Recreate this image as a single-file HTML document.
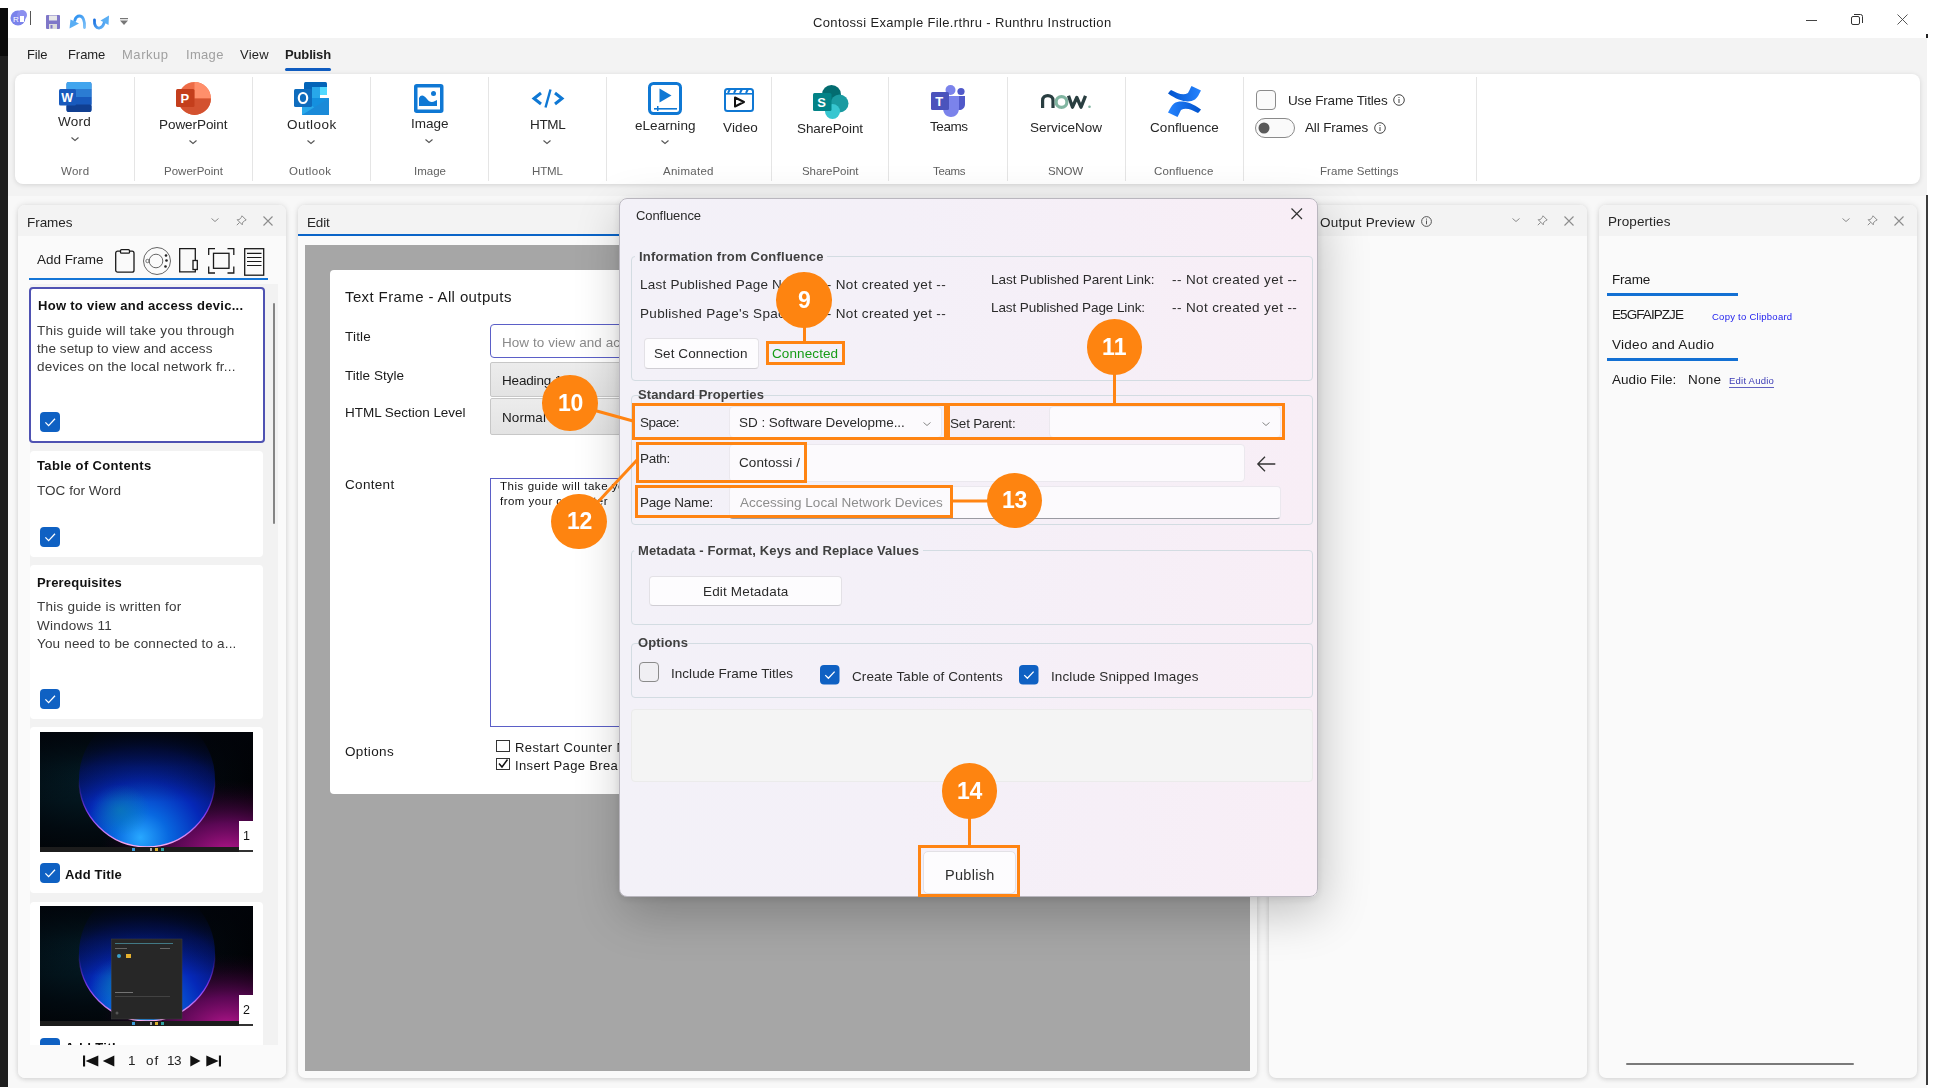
<!DOCTYPE html>
<html><head><meta charset="utf-8">
<style>
*{box-sizing:border-box;margin:0;padding:0}
html,body{width:1935px;height:1092px;overflow:hidden;background:#fff;font-family:"Liberation Sans",sans-serif;color:#1b1b1b;position:relative}
.a{position:absolute}
.t{position:absolute;white-space:nowrap;line-height:1;will-change:transform}
svg{position:absolute;overflow:visible}
</style></head><body>
<div class="a" style="left:0px;top:8px;width:8px;height:48px;background:#0a0a0a"></div>
<div class="a" style="left:0px;top:56px;width:8px;height:1031px;background:#1e1e1e"></div>
<div class="a" style="left:8px;top:38px;width:1919px;height:158px;background:#f3f3f3"></div>
<div class="a" style="left:8px;top:196px;width:1919px;height:892px;background:#f8f8f8"></div>
<div class="a" style="left:1926px;top:195px;width:2px;height:890px;background:#3c3c3c"></div>
<svg style="left:10px;top:9px" width="18" height="17"><circle cx="8" cy="9" r="7.5" fill="#7b83eb"/><circle cx="12" cy="6" r="5" fill="#8b8fef"/><text x="3" y="13" font-size="8" fill="#fff" font-family="Liberation Sans">R</text><rect x="10" y="7" width="4" height="6" fill="#fff"/></svg>
<div class="a" style="left:30px;top:11px;width:1px;height:14px;background:#555"></div>
<svg style="left:46px;top:15px" width="14" height="14"><rect x="0" y="0" width="14" height="14" rx="1" fill="#7f77c8"/><rect x="3" y="0.5" width="8" height="5" fill="#e8e8e8"/><rect x="3" y="9" width="8" height="5" fill="#dcdcdc"/><rect x="4.5" y="10" width="2" height="3.5" fill="#7f77c8"/></svg>
<svg style="left:69px;top:15px" width="17" height="14"><defs><linearGradient id="ug" x1="0" y1="0" x2="1" y2="1"><stop offset="0" stop-color="#2a8ff0"/><stop offset="1" stop-color="#7cc0f8"/></linearGradient></defs><path d="M15.5 12.5 C16 6 14 1 10.5 1 C8 1 6.5 3 5.8 5.5" fill="none" stroke="url(#ug)" stroke-width="2.8" stroke-linecap="round"/><path d="M0.5 13.5 L1.5 4.5 L10 8.5 Z" fill="#5aaef4"/></svg>
<svg style="left:93px;top:15px" width="17" height="14"><defs><linearGradient id="rg" x1="0" y1="0" x2="1" y2="1"><stop offset="0" stop-color="#1a70e0"/><stop offset="1" stop-color="#6ab8f8"/></linearGradient></defs><path d="M1.5 5 C1 10 3 13.5 6.5 13 C9 12.5 10.5 10 11.3 7.5" fill="none" stroke="url(#rg)" stroke-width="2.8" stroke-linecap="round"/><path d="M16 0.5 L15.5 10 L7.5 5.5 Z" fill="#5aaef4"/></svg>
<svg style="left:120px;top:18px" width="9" height="8"><rect x="0" y="0" width="8" height="1.2" fill="#777"/><path d="M0 2.5 L8 2.5 L4 7 Z" fill="#777"/></svg>
<div class="t" style="left:813.0px;top:15.50px;font-size:13px;color:#1f1f1f;letter-spacing:0.356px;">Contossi Example File.rthru - Runthru Instruction</div>
<div class="a" style="left:1806px;top:20px;width:11px;height:1px;background:#444"></div>
<div class="a" style="left:1926px;top:34px;width:2px;height:4px;background:#222"></div>
<svg style="left:1851px;top:14px" width="12" height="12"><rect x="0.5" y="2.5" width="8" height="8" rx="1.5" fill="none" stroke="#333" stroke-width="1"/><path d="M3 0.5 H9.5 A2 2 0 0 1 11.5 2.5 V9" fill="none" stroke="#333" stroke-width="1"/></svg>
<svg style="left:1897px;top:14px" width="11" height="11"><path d="M0.5 0.5 L10.5 10.5 M10.5 0.5 L0.5 10.5" stroke="#444" stroke-width="0.9"/></svg>
<div class="t" style="left:27.3px;top:47.80px;font-size:13px;color:#1f1f1f;letter-spacing:-0.162px;">File</div>
<div class="t" style="left:67.5px;top:47.80px;font-size:13px;color:#1f1f1f;letter-spacing:-0.072px;">Frame</div>
<div class="t" style="left:121.6px;top:47.80px;font-size:13px;color:#a0a0a0;letter-spacing:0.542px;">Markup</div>
<div class="t" style="left:185.6px;top:47.80px;font-size:13px;color:#a0a0a0;letter-spacing:0.314px;">Image</div>
<div class="t" style="left:239.5px;top:47.80px;font-size:13px;color:#1f1f1f;letter-spacing:0.264px;">View</div>
<div class="t" style="left:285.4px;top:47.80px;font-size:13px;font-weight:bold;color:#1f1f1f;letter-spacing:-0.135px;">Publish</div>
<div class="a" style="left:285px;top:68px;width:46px;height:2.5px;background:#0f5cc0;border-radius:2px"></div>
<div class="a" style="left:15px;top:74px;width:1905px;height:110px;background:#fff;border-radius:8px;box-shadow:0 1px 5px rgba(0,0,0,.13)"></div>
<div class="a" style="left:133.5px;top:77px;width:1px;height:104px;background:#e5e5e5"></div>
<div class="a" style="left:251.5px;top:77px;width:1px;height:104px;background:#e5e5e5"></div>
<div class="a" style="left:369.5px;top:77px;width:1px;height:104px;background:#e5e5e5"></div>
<div class="a" style="left:487.5px;top:77px;width:1px;height:104px;background:#e5e5e5"></div>
<div class="a" style="left:605.5px;top:77px;width:1px;height:104px;background:#e5e5e5"></div>
<div class="a" style="left:770.5px;top:77px;width:1px;height:104px;background:#e5e5e5"></div>
<div class="a" style="left:888px;top:77px;width:1px;height:104px;background:#e5e5e5"></div>
<div class="a" style="left:1006.5px;top:77px;width:1px;height:104px;background:#e5e5e5"></div>
<div class="a" style="left:1124.5px;top:77px;width:1px;height:104px;background:#e5e5e5"></div>
<div class="a" style="left:1242.5px;top:77px;width:1px;height:104px;background:#e5e5e5"></div>
<div class="a" style="left:1476px;top:77px;width:1px;height:104px;background:#e5e5e5"></div>
<svg style="left:59px;top:82px" width="33" height="30">
<rect x="7.5" y="0" width="25" height="30" rx="2" fill="#185abd"/>
<rect x="7.5" y="0" width="25" height="8" rx="2" fill="#41a5ee"/>
<rect x="7.5" y="7" width="25" height="8" fill="#2b7cd3"/>
<rect x="7.5" y="15" width="25" height="7.5" fill="#185abd"/>
<rect x="7.5" y="22.5" width="25" height="7.5" rx="2" fill="#103f91"/>
<rect x="0" y="7" width="17" height="16.5" rx="1.5" fill="#185abd"/>
<text x="2.3" y="20" font-size="12.5" font-weight="bold" fill="#fff" font-family="Liberation Sans">W</text>
</svg>
<div class="t" style="left:58.4px;top:115.47px;font-size:13.5px;color:#262626;letter-spacing:0.248px;">Word</div>
<svg style="left:70.8px;top:136.5px" width="8" height="4.0"><path d="M0.5 0.5 L4.0 3.5 L7.5 0.5" fill="none" stroke="#555" stroke-width="1.1"/></svg>
<div class="t" style="left:61.2px;top:165.97px;font-size:11.5px;color:#616161;letter-spacing:0.283px;">Word</div>
<svg style="left:176px;top:82px" width="35" height="33">
<circle cx="18.5" cy="16.5" r="16.4" fill="#ed6c47"/>
<path d="M18.5 0 A16.4 16.4 0 0 1 34.9 16.5 L18.5 16.5 Z" fill="#ff8f6b"/>
<path d="M2.1 16.5 A16.4 16.4 0 0 0 34.9 16.5 Z" fill="#d35230"/>
<rect x="0" y="7" width="18.5" height="18" rx="1.5" fill="#c43e1c"/>
<text x="4.5" y="21" font-size="13" font-weight="bold" fill="#fff" font-family="Liberation Sans">P</text>
</svg>
<div class="t" style="left:158.9px;top:118.27px;font-size:13.5px;color:#262626;letter-spacing:-0.064px;">PowerPoint</div>
<svg style="left:189.0px;top:139.5px" width="8" height="4.0"><path d="M0.5 0.5 L4.0 3.5 L7.5 0.5" fill="none" stroke="#555" stroke-width="1.1"/></svg>
<div class="t" style="left:163.5px;top:165.97px;font-size:11.5px;color:#616161;letter-spacing:0.009px;">PowerPoint</div>
<svg style="left:294px;top:82px" width="35" height="33">
<rect x="10" y="0" width="23" height="12" rx="1.5" fill="#0364b8"/>
<rect x="10" y="5" width="8" height="8" fill="#0a2767" opacity=".0"/>
<rect x="18" y="5" width="8" height="8" fill="#28a8ea"/>
<rect x="26" y="5" width="7" height="8" fill="#50d9ff"/>
<rect x="10" y="13" width="8" height="8" fill="#0078d4"/>
<rect x="18" y="13" width="8" height="8" fill="#28a8ea"/>
<path d="M8 16 L35 16 L35 33 L8 33 Z" fill="#1490df"/>
<path d="M8 16 L21 26 L35 16 L35 33 L8 33 Z" fill="#28a8ea"/>
<path d="M8 33 L35 16 L35 33 Z" fill="#1a8ad8"/>
<rect x="0" y="7" width="18" height="18" rx="1.5" fill="#0f6cbd"/>
<ellipse cx="9" cy="16" rx="4.2" ry="5" fill="none" stroke="#fff" stroke-width="2.2"/>
</svg>
<div class="t" style="left:286.5px;top:118.27px;font-size:13.5px;color:#262626;letter-spacing:0.439px;">Outlook</div>
<svg style="left:307.0px;top:139.5px" width="8" height="4.0"><path d="M0.5 0.5 L4.0 3.5 L7.5 0.5" fill="none" stroke="#555" stroke-width="1.1"/></svg>
<div class="t" style="left:289.4px;top:165.97px;font-size:11.5px;color:#616161;letter-spacing:0.395px;">Outlook</div>
<svg style="left:414px;top:84px" width="30" height="29">
<rect x="1.75" y="1.75" width="26" height="25.5" rx="1" fill="#fff" stroke="#0f78d4" stroke-width="3.5"/>
<path d="M5 22 L5 14 C7 10 10 11 13 15 C15 18 18 19 21 17 L23 16 L23 22 Z" fill="#0f78d4"/>
<circle cx="19.5" cy="9.5" r="2.5" fill="#0f78d4"/>
</svg>
<div class="t" style="left:410.6px;top:117.47px;font-size:13.5px;color:#262626;letter-spacing:-0.024px;">Image</div>
<svg style="left:425.0px;top:138.5px" width="8" height="4.0"><path d="M0.5 0.5 L4.0 3.5 L7.5 0.5" fill="none" stroke="#555" stroke-width="1.1"/></svg>
<div class="t" style="left:413.7px;top:165.97px;font-size:11.5px;color:#616161;letter-spacing:0.008px;">Image</div>
<svg style="left:532px;top:89px" width="32" height="19">
<path d="M9 4 L2 9.5 L9 15" fill="none" stroke="#0f78d4" stroke-width="3" stroke-linejoin="miter"/>
<path d="M23 4 L30 9.5 L23 15" fill="none" stroke="#0f78d4" stroke-width="3"/>
<path d="M18.5 0.5 L13.5 18.5" stroke="#0f78d4" stroke-width="2.4"/>
</svg>
<div class="t" style="left:529.7px;top:118.37px;font-size:13.5px;color:#262626;letter-spacing:-0.337px;">HTML</div>
<svg style="left:543.0px;top:139.5px" width="8" height="4.0"><path d="M0.5 0.5 L4.0 3.5 L7.5 0.5" fill="none" stroke="#555" stroke-width="1.1"/></svg>
<div class="t" style="left:531.5px;top:166.17px;font-size:11.5px;color:#616161;letter-spacing:-0.151px;">HTML</div>
<svg style="left:648px;top:82px" width="34" height="33">
<rect x="1.5" y="1.5" width="31" height="30" rx="4" fill="none" stroke="#0f78d4" stroke-width="3"/>
<path d="M11.5 6.5 L23.5 13.5 L11.5 20.5 Z" fill="#0f78d4"/>
<rect x="6" y="26" width="23" height="1.6" fill="#0f78d4"/>
<rect x="9" y="24" width="1.5" height="5" fill="#0f78d4"/>
</svg>
<div class="t" style="left:634.9px;top:118.87px;font-size:13.5px;color:#262626;letter-spacing:0.050px;">eLearning</div>
<svg style="left:661.0px;top:139.5px" width="8" height="4.0"><path d="M0.5 0.5 L4.0 3.5 L7.5 0.5" fill="none" stroke="#555" stroke-width="1.1"/></svg>
<svg style="left:724px;top:88px" width="30" height="24">
<rect x="1" y="1" width="28" height="22" rx="2.5" fill="none" stroke="#0f78d4" stroke-width="2"/>
<rect x="1" y="5" width="28" height="1.6" fill="#0f78d4"/>
<path d="M6 1 L4 5 M12 1 L10 5 M18 1 L16 5 M24 1 L22 5" stroke="#0f78d4" stroke-width="2"/>
<path d="M11 9.5 L20 14 L11 18.5 Z" fill="none" stroke="#111" stroke-width="2" stroke-linejoin="round"/>
</svg>
<div class="t" style="left:722.6px;top:121.27px;font-size:13.5px;color:#262626;letter-spacing:0.143px;">Video</div>
<div class="t" style="left:663.2px;top:166.17px;font-size:11.5px;color:#616161;letter-spacing:0.265px;">Animated</div>
<svg style="left:813px;top:85px" width="36" height="35">
<circle cx="18.5" cy="9.5" r="9.5" fill="#036c70"/>
<circle cx="26.5" cy="18.5" r="9" fill="#1a9ba1"/>
<circle cx="19.5" cy="26.5" r="7.5" fill="#37c6d0"/>
<rect x="0" y="8" width="18.5" height="18" rx="1.5" fill="#038387"/>
<text x="4.3" y="22" font-size="13" font-weight="bold" fill="#fff" font-family="Liberation Sans">S</text>
</svg>
<div class="t" style="left:797.2px;top:122.47px;font-size:13.5px;color:#262626;letter-spacing:-0.079px;">SharePoint</div>
<div class="t" style="left:802.3px;top:165.87px;font-size:11.5px;color:#616161;letter-spacing:-0.050px;">SharePoint</div>
<svg style="left:931px;top:85px" width="35" height="33">
<circle cx="19.5" cy="5" r="5" fill="#7b83eb"/>
<circle cx="30" cy="6.5" r="3.6" fill="#5059c9"/>
<path d="M25 11 H34 V19 C34 23 31 25 28.5 25 C26 25 25 23 25 20 Z" fill="#5059c9"/>
<path d="M12 11 H28 V23 C28 29 24 32 20 32 C15 32 12 28 12 23 Z" fill="#7b83eb"/>
<rect x="0" y="7" width="18" height="18" rx="1.5" fill="#4b53bc"/>
<text x="4.2" y="21" font-size="13" font-weight="bold" fill="#fff" font-family="Liberation Sans">T</text>
</svg>
<div class="t" style="left:929.5px;top:120.07px;font-size:13.5px;color:#262626;letter-spacing:-0.412px;">Teams</div>
<div class="t" style="left:932.7px;top:165.87px;font-size:11.5px;color:#616161;letter-spacing:-0.354px;">Teams</div>
<svg style="left:1041px;top:94px" width="51" height="15">
<path d="M1.6 14 V6.5 C1.6 3.2 4 1.6 6.8 1.6 C9.6 1.6 12 3.2 12 6.5 V14" fill="none" stroke="#293e40" stroke-width="3.2"/>
<circle cx="20.5" cy="8" r="5.4" fill="none" stroke="#81b5a1" stroke-width="3.2"/>
<path d="M27.5 1.8 L31.5 13.2 L35.8 3.5 L40 13.2 L44.5 1.8" fill="none" stroke="#293e40" stroke-width="3.3" stroke-linejoin="round"/>
<circle cx="48.5" cy="12.8" r="1.3" fill="#81b5a1"/>
</svg>
<div class="t" style="left:1030.2px;top:121.37px;font-size:13.5px;color:#262626;letter-spacing:-0.012px;">ServiceNow</div>
<div class="t" style="left:1048.3px;top:165.87px;font-size:11.5px;color:#616161;letter-spacing:-0.244px;">SNOW</div>
<svg style="left:1167px;top:85px" width="35" height="33">
<defs><linearGradient id="cg1" x1="0" y1="0" x2="1" y2="0"><stop offset="0" stop-color="#0052cc"/><stop offset="1" stop-color="#2684ff"/></linearGradient>
<linearGradient id="cg2" x1="1" y1="0" x2="0" y2="0"><stop offset="0" stop-color="#0052cc"/><stop offset="1" stop-color="#2684ff"/></linearGradient></defs>
<path d="M1 8.5 C2 7 3 6 4 5 C10 8 16 11 21 8 C22 6 23 4 24.5 1 L34 5.5 C32 9 31 12 28 14.5 C22 18 13 17 1 8.5 Z" fill="url(#cg1)"/>
<path d="M34 24.5 C33 26 32 27 31 28 C25 25 19 22 14 25 C13 27 12 29 10.5 32 L1 27.5 C3 24 4 21 7 18.5 C13 15 22 16 34 24.5 Z" fill="url(#cg2)"/>
</svg>
<div class="t" style="left:1149.7px;top:121.37px;font-size:13.5px;color:#262626;letter-spacing:0.060px;">Confluence</div>
<div class="t" style="left:1154.0px;top:165.87px;font-size:11.5px;color:#616161;letter-spacing:0.132px;">Confluence</div>
<div class="a" style="left:1256px;top:90px;width:20px;height:20px;border:1px solid #8a8a8a;border-radius:4px;background:#fafafa"></div>
<div class="t" style="left:1287.6px;top:93.57px;font-size:13.5px;color:#262626;letter-spacing:-0.154px;">Use Frame Titles</div>
<svg style="left:1393px;top:94px" width="12" height="12"><circle cx="6" cy="6" r="5.3" fill="none" stroke="#444" stroke-width="1"/><rect x="5.5" y="5" width="1" height="4" fill="#444"/><rect x="5.5" y="3" width="1" height="1" fill="#444"/></svg>
<div class="a" style="left:1255px;top:118px;width:40px;height:20px;border:1px solid #8a8a8a;border-radius:10px;background:#fafafa"></div>
<svg style="left:1258px;top:122px" width="12" height="12"><circle cx="6" cy="6" r="5.5" fill="#5a5a5a"/></svg>
<div class="t" style="left:1305.3px;top:121.47px;font-size:13.5px;color:#262626;letter-spacing:-0.151px;">All Frames</div>
<svg style="left:1374px;top:122px" width="12" height="12"><circle cx="6" cy="6" r="5.3" fill="none" stroke="#444" stroke-width="1"/><rect x="5.5" y="5" width="1" height="4" fill="#444"/><rect x="5.5" y="3" width="1" height="1" fill="#444"/></svg>
<div class="t" style="left:1320.0px;top:165.97px;font-size:11.5px;color:#616161;letter-spacing:0.045px;">Frame Settings</div>
<div class="a" style="left:18px;top:205px;width:268px;height:873px;background:#fafafa;border-radius:7px;box-shadow:0 0 6px rgba(0,0,0,.12),0 2px 4px rgba(0,0,0,.07)"></div>
<div class="a" style="left:18px;top:205px;width:268px;height:31px;background:#f3f3f3;border-radius:7px 7px 0 0"></div>
<div class="a" style="left:298px;top:205px;width:959px;height:873px;background:#fafafa;border-radius:7px;box-shadow:0 0 6px rgba(0,0,0,.12),0 2px 4px rgba(0,0,0,.07)"></div>
<div class="a" style="left:298px;top:205px;width:959px;height:29px;background:#f3f3f3;border-radius:7px 7px 0 0"></div>
<div class="a" style="left:298px;top:234px;width:959px;height:2px;background:#0a64c8"></div>
<div class="a" style="left:1269px;top:205px;width:318px;height:873px;background:#fafafa;border-radius:7px;box-shadow:0 0 6px rgba(0,0,0,.12),0 2px 4px rgba(0,0,0,.07)"></div>
<div class="a" style="left:1269px;top:205px;width:318px;height:31px;background:#f3f3f3;border-radius:7px 7px 0 0"></div>
<div class="a" style="left:1599px;top:205px;width:318px;height:873px;background:#fafafa;border-radius:7px;box-shadow:0 0 6px rgba(0,0,0,.12),0 2px 4px rgba(0,0,0,.07)"></div>
<div class="a" style="left:1599px;top:205px;width:318px;height:31px;background:#f3f3f3;border-radius:7px 7px 0 0"></div>
<div class="t" style="left:26.8px;top:215.57px;font-size:13.5px;color:#262626;letter-spacing:-0.042px;">Frames</div>
<svg style="left:211.1px;top:218.0px" width="8" height="4.0"><path d="M0.5 0.5 L4.0 3.5 L7.5 0.5" fill="none" stroke="#8c8c8c" stroke-width="1.0"/></svg>
<svg style="left:236px;top:215px" width="11" height="11"><path d="M6 0.8 L10.2 5 L8.6 5.6 L6.3 8 L6.3 9.8 L1.2 4.7 L3 4.7 L5.4 2.4 Z M3.6 7.4 L0.8 10.2" fill="none" stroke="#8c8c8c" stroke-width="1" stroke-linejoin="round"/></svg>
<svg style="left:262.5px;top:216px" width="10" height="10"><path d="M0.5 0.5 L9.5 9.5 M9.5 0.5 L0.5 9.5" stroke="#8c8c8c" stroke-width="1.1"/></svg>
<div class="t" style="left:306.6px;top:215.57px;font-size:13.5px;color:#262626;letter-spacing:-0.191px;">Edit</div>
<div class="t" style="left:1319.6px;top:215.67px;font-size:13.5px;color:#262626;letter-spacing:0.193px;">Output Preview</div>
<svg style="left:1421px;top:216px" width="11" height="11"><circle cx="5.5" cy="5.5" r="4.9" fill="none" stroke="#555" stroke-width="1"/><rect x="5" y="4.5" width="1" height="3.8" fill="#555"/><rect x="5" y="2.6" width="1" height="1" fill="#555"/></svg>
<svg style="left:1511.7px;top:218.0px" width="8" height="4.0"><path d="M0.5 0.5 L4.0 3.5 L7.5 0.5" fill="none" stroke="#8c8c8c" stroke-width="1.0"/></svg>
<svg style="left:1537px;top:215px" width="11" height="11"><path d="M6 0.8 L10.2 5 L8.6 5.6 L6.3 8 L6.3 9.8 L1.2 4.7 L3 4.7 L5.4 2.4 Z M3.6 7.4 L0.8 10.2" fill="none" stroke="#8c8c8c" stroke-width="1" stroke-linejoin="round"/></svg>
<svg style="left:1563.5px;top:216px" width="10" height="10"><path d="M0.5 0.5 L9.5 9.5 M9.5 0.5 L0.5 9.5" stroke="#8c8c8c" stroke-width="1.1"/></svg>
<div class="t" style="left:1607.9px;top:215.37px;font-size:13.5px;color:#262626;letter-spacing:0.097px;">Properties</div>
<svg style="left:1842.0px;top:218.0px" width="8" height="4.0"><path d="M0.5 0.5 L4.0 3.5 L7.5 0.5" fill="none" stroke="#8c8c8c" stroke-width="1.0"/></svg>
<svg style="left:1866.5px;top:215px" width="11" height="11"><path d="M6 0.8 L10.2 5 L8.6 5.6 L6.3 8 L6.3 9.8 L1.2 4.7 L3 4.7 L5.4 2.4 Z M3.6 7.4 L0.8 10.2" fill="none" stroke="#8c8c8c" stroke-width="1" stroke-linejoin="round"/></svg>
<svg style="left:1893.5px;top:216px" width="10" height="10"><path d="M0.5 0.5 L9.5 9.5 M9.5 0.5 L0.5 9.5" stroke="#8c8c8c" stroke-width="1.1"/></svg>
<div class="t" style="left:36.5px;top:253.47px;font-size:13.5px;color:#1f1f1f;letter-spacing:-0.031px;">Add Frame</div>
<svg style="left:115px;top:249px" width="20" height="24"><rect x="0.7" y="2.2" width="18.3" height="21" rx="2" fill="none" stroke="#1a1a1a" stroke-width="1.3"/><rect x="5.5" y="0.7" width="9" height="3.5" rx="1" fill="#fff" stroke="#1a1a1a" stroke-width="1.3"/></svg>
<svg style="left:143px;top:247px" width="28" height="28"><circle cx="14" cy="14" r="13.5" fill="none" stroke="#555" stroke-width="0.9"/><circle cx="13" cy="14" r="6.8" fill="none" stroke="#555" stroke-width="0.9"/><circle cx="4.5" cy="14" r="1.7" fill="none" stroke="#555" stroke-width="0.8"/><circle cx="23" cy="8.5" r="1.3" fill="#222"/><circle cx="23.5" cy="13.5" r="1.3" fill="#222"/><circle cx="22.5" cy="19.5" r="1.3" fill="#222"/></svg>
<svg style="left:179px;top:248px" width="20" height="25"><path d="M0.7 0.7 H16.3 V23.8 H0.7 Z" fill="none" stroke="#1a1a1a" stroke-width="1.3"/><rect x="14" y="12.5" width="4.3" height="9" fill="#fff" stroke="#1a1a1a" stroke-width="1.3"/></svg>
<svg style="left:208px;top:248px" width="27" height="26"><path d="M0.7 7 V0.7 H7 M19.5 0.7 H25.8 V7 M25.8 18.5 V25 H19.5 M7 25 H0.7 V18.5" fill="none" stroke="#1a1a1a" stroke-width="1.3"/><rect x="5.5" y="5.3" width="15.5" height="15" fill="none" stroke="#1a1a1a" stroke-width="1.3"/></svg>
<svg style="left:244px;top:248px" width="21" height="28"><rect x="0.7" y="0.7" width="19" height="26.5" fill="none" stroke="#1a1a1a" stroke-width="1.3"/><path d="M3 5.3 H17.5 M3 9.5 H17.5 M3 13.5 H17.5 M3 17.5 H17.5" stroke="#1a1a1a" stroke-width="1.2"/></svg>
<div class="a" style="left:29px;top:278px;width:239px;height:2px;background:#1475d6"></div>
<div class="a" style="left:30px;top:284px;width:248px;height:761px;background:#f2f2f2;overflow:hidden">
<div class="a" style="left:0px;top:166.5px;width:233px;height:106.5px;background:#fff;border-radius:4px;"></div>
<div class="a" style="left:0px;top:281px;width:233px;height:154px;background:#fff;border-radius:4px;"></div>
<div class="a" style="left:0px;top:443px;width:233px;height:166px;background:#fff;border-radius:4px;"></div>
<div class="a" style="left:0px;top:617.5px;width:233px;height:178.5px;background:#fff;border-radius:4px;"></div>
</div>
<div class="a" style="left:29px;top:287px;width:236px;height:156px;background:#fff;border:2px solid #4f52b2;border-radius:4px"></div>
<div class="a" style="left:272.5px;top:303px;width:2px;height:221px;background:#858585;border-radius:1px"></div>
<div class="t" style="left:37.6px;top:299.00px;font-size:13px;font-weight:bold;color:#111;letter-spacing:0.286px;">How to view and access devic...</div>
<div class="t" style="left:37.4px;top:323.77px;font-size:13.5px;color:#3a3a3a;letter-spacing:0.265px;">This guide will take you through</div>
<div class="t" style="left:37.4px;top:342.47px;font-size:13.5px;color:#3a3a3a;letter-spacing:0.077px;">the setup to view and access</div>
<div class="t" style="left:37.4px;top:360.37px;font-size:13.5px;color:#3a3a3a;letter-spacing:0.191px;">devices on the local network fr...</div>
<svg style="left:40px;top:412px" width="20" height="20"><rect x="0" y="0" width="20" height="20" rx="4" fill="#0f61c3"/><path d="M5.4 10.4 L8.6 13.600000000000001 L15.0 6.800000000000001" fill="none" stroke="#fff" stroke-width="1.3"/></svg>
<div class="t" style="left:36.5px;top:459.20px;font-size:13px;font-weight:bold;color:#111;letter-spacing:0.335px;">Table of Contents</div>
<div class="t" style="left:36.5px;top:484.37px;font-size:13.5px;color:#3a3a3a;letter-spacing:0.040px;">TOC for Word</div>
<svg style="left:40px;top:527.4px" width="20" height="20"><rect x="0" y="0" width="20" height="20" rx="4" fill="#0f61c3"/><path d="M5.4 10.4 L8.6 13.600000000000001 L15.0 6.800000000000001" fill="none" stroke="#fff" stroke-width="1.3"/></svg>
<div class="t" style="left:37.4px;top:576.00px;font-size:13px;font-weight:bold;color:#111;letter-spacing:0.202px;">Prerequisites</div>
<div class="t" style="left:37.4px;top:600.27px;font-size:13.5px;color:#3a3a3a;letter-spacing:0.228px;">This guide is written for</div>
<div class="t" style="left:37.4px;top:618.97px;font-size:13.5px;color:#3a3a3a;letter-spacing:0.247px;">Windows 11</div>
<div class="t" style="left:37.4px;top:637.37px;font-size:13.5px;color:#3a3a3a;letter-spacing:0.175px;">You need to be connected to a...</div>
<svg style="left:40px;top:689.2px" width="20" height="20"><rect x="0" y="0" width="20" height="20" rx="4" fill="#0f61c3"/><path d="M5.4 10.4 L8.6 13.600000000000001 L15.0 6.800000000000001" fill="none" stroke="#fff" stroke-width="1.3"/></svg>
<svg style="left:40px;top:732px;overflow:hidden" width="213" height="120" viewBox="0 0 213 120">
<defs>
<radialGradient id="g1bg" cx="0.25" cy="0.35" r="0.8"><stop offset="0" stop-color="#04202a"/><stop offset="0.6" stop-color="#020a10"/><stop offset="1" stop-color="#010103"/></radialGradient>
<radialGradient id="g1mg" cx="0.88" cy="1" r="0.6"><stop offset="0" stop-color="#b0158a"/><stop offset="0.4" stop-color="#6a0862" stop-opacity="0.85"/><stop offset="1" stop-color="#200020" stop-opacity="0"/></radialGradient>
<radialGradient id="g1sp" cx="0.5" cy="1" r="1" fx="0.45" fy="0.93"><stop offset="0" stop-color="#28a8ff"/><stop offset="0.2" stop-color="#0868e0"/><stop offset="0.45" stop-color="#0528b8"/><stop offset="0.7" stop-color="#03167e" stop-opacity="0.85"/><stop offset="0.88" stop-color="#020e50" stop-opacity="0.35"/><stop offset="1" stop-color="#020a30" stop-opacity="0"/></radialGradient>
<radialGradient id="g1tl" cx="0.5" cy="0.5" r="0.5"><stop offset="0" stop-color="#0a8aa8" stop-opacity="0.55"/><stop offset="1" stop-color="#0a8aa8" stop-opacity="0"/></radialGradient>
<linearGradient id="g1dk" x1="0" y1="0" x2="0" y2="1"><stop offset="0" stop-color="#01040a" stop-opacity="0.85"/><stop offset="0.5" stop-color="#01040a" stop-opacity="0.3"/><stop offset="1" stop-color="#01040a" stop-opacity="0"/></linearGradient>
<linearGradient id="g1rg" x1="0" y1="0" x2="0" y2="1"><stop offset="0" stop-color="#7030ff" stop-opacity="0"/><stop offset="0.5" stop-color="#6a2cff" stop-opacity="0"/><stop offset="0.75" stop-color="#8a3cff" stop-opacity="0.9"/><stop offset="1" stop-color="#ffb0f0"/></linearGradient>
</defs>
<rect width="213" height="120" fill="url(#g1bg)"/>
<rect width="213" height="120" fill="url(#g1mg)"/>
<ellipse cx="107" cy="47" rx="68" ry="68" fill="url(#g1sp)"/>

<ellipse cx="80" cy="78" rx="30" ry="26" fill="url(#g1tl)"/>
<rect x="0" y="0" width="213" height="70" fill="url(#g1dk)"/>
<ellipse cx="107" cy="47" rx="68" ry="68" fill="none" stroke="url(#g1rg)" stroke-width="1.3"/>

<rect x="0" y="115" width="213" height="5" fill="#1c1c1c"/>
<rect x="92" y="116" width="3" height="3" fill="#3a9ad8"/><rect x="110" y="116" width="2" height="3" fill="#aaa"/><rect x="115" y="116" width="3" height="3" fill="#d8b030"/><rect x="121" y="116" width="3" height="3" fill="#30a0a0"/>
<rect x="199" y="89" width="14" height="29" fill="#fff"/>
<rect x="199" y="118" width="14" height="2" fill="#333"/>
</svg>
<div class="t" style="left:243.0px;top:830.42px;font-size:12.5px;color:#111;">1</div>
<svg style="left:40.2px;top:863px" width="20" height="20"><rect x="0" y="0" width="20" height="20" rx="4" fill="#0f61c3"/><path d="M5.4 10.4 L8.6 13.600000000000001 L15.0 6.800000000000001" fill="none" stroke="#fff" stroke-width="1.3"/></svg>
<div class="t" style="left:64.7px;top:868.00px;font-size:13px;font-weight:bold;color:#111;letter-spacing:0.181px;">Add Title</div>
<svg style="left:40px;top:906px;overflow:hidden" width="213" height="120" viewBox="0 0 213 120">
<defs>
<radialGradient id="g2bg" cx="0.25" cy="0.35" r="0.8"><stop offset="0" stop-color="#04202a"/><stop offset="0.6" stop-color="#020a10"/><stop offset="1" stop-color="#010103"/></radialGradient>
<radialGradient id="g2mg" cx="0.88" cy="1" r="0.6"><stop offset="0" stop-color="#b0158a"/><stop offset="0.4" stop-color="#6a0862" stop-opacity="0.85"/><stop offset="1" stop-color="#200020" stop-opacity="0"/></radialGradient>
<radialGradient id="g2sp" cx="0.5" cy="1" r="1" fx="0.45" fy="0.93"><stop offset="0" stop-color="#28a8ff"/><stop offset="0.2" stop-color="#0868e0"/><stop offset="0.45" stop-color="#0528b8"/><stop offset="0.7" stop-color="#03167e" stop-opacity="0.85"/><stop offset="0.88" stop-color="#020e50" stop-opacity="0.35"/><stop offset="1" stop-color="#020a30" stop-opacity="0"/></radialGradient>
<radialGradient id="g2tl" cx="0.5" cy="0.5" r="0.5"><stop offset="0" stop-color="#0a8aa8" stop-opacity="0.55"/><stop offset="1" stop-color="#0a8aa8" stop-opacity="0"/></radialGradient>
<linearGradient id="g2dk" x1="0" y1="0" x2="0" y2="1"><stop offset="0" stop-color="#01040a" stop-opacity="0.85"/><stop offset="0.5" stop-color="#01040a" stop-opacity="0.3"/><stop offset="1" stop-color="#01040a" stop-opacity="0"/></linearGradient>
<linearGradient id="g2rg" x1="0" y1="0" x2="0" y2="1"><stop offset="0" stop-color="#7030ff" stop-opacity="0"/><stop offset="0.5" stop-color="#6a2cff" stop-opacity="0"/><stop offset="0.75" stop-color="#8a3cff" stop-opacity="0.9"/><stop offset="1" stop-color="#ffb0f0"/></linearGradient>
</defs>
<rect width="213" height="120" fill="url(#g2bg)"/>
<rect width="213" height="120" fill="url(#g2mg)"/>
<ellipse cx="107" cy="47" rx="68" ry="68" fill="url(#g2sp)"/>

<ellipse cx="80" cy="78" rx="30" ry="26" fill="url(#g2tl)"/>
<rect x="0" y="0" width="213" height="70" fill="url(#g2dk)"/>
<ellipse cx="107" cy="47" rx="68" ry="68" fill="none" stroke="url(#g2rg)" stroke-width="1.3"/>
<rect x="71.5" y="33" width="70.5" height="80" fill="#272727" stroke="#3a3a3a" stroke-width="0.6"/><rect x="75" y="37" width="58" height="0.8" fill="#4a8f9e"/><rect x="75" y="42" width="12" height="0.8" fill="#777"/><rect x="120" y="42" width="10" height="0.8" fill="#777"/><circle cx="79" cy="50" r="2" fill="#3aa0c8"/><rect x="86" y="48" width="5" height="4" fill="#e6b12e"/><rect x="75" y="86" width="18" height="0.8" fill="#888"/><rect x="75" y="90" width="55" height="0.6" fill="#555"/><circle cx="77" cy="107" r="1.5" fill="#555"/>
<rect x="0" y="115" width="213" height="5" fill="#1c1c1c"/>
<rect x="92" y="116" width="3" height="3" fill="#3a9ad8"/><rect x="110" y="116" width="2" height="3" fill="#aaa"/><rect x="115" y="116" width="3" height="3" fill="#d8b030"/><rect x="121" y="116" width="3" height="3" fill="#30a0a0"/>
<rect x="199" y="89" width="14" height="29" fill="#fff"/>
<rect x="199" y="118" width="14" height="2" fill="#333"/>
</svg>
<div class="t" style="left:243.0px;top:1004.42px;font-size:12.5px;color:#111;">2</div>
<div class="a" style="left:40px;top:1037.5px;width:20px;height:7.5px;overflow:hidden"><svg style="left:0;top:0" width="20" height="20"><rect x="0" y="0" width="20" height="20" rx="4" fill="#0f61c3"/></svg></div>
<div class="a" style="left:64px;top:1036px;width:60px;height:9px;overflow:hidden"><div class="t" style="left:0.7px;top:4.5px;font-size:13px;font-weight:bold;color:#111;letter-spacing:0.35px">Add Title</div></div>
<div class="a" style="left:18px;top:1045px;width:268px;height:33px;background:#fafafa;border-radius:0 0 7px 7px"></div>
<svg style="left:83px;top:1055px" width="140" height="12"><rect x="0" y="0.5" width="2.1" height="11" fill="#111"/><path d="M15.3 0.5 L2.6 6 L15.3 11.5 Z" fill="#111"/><path d="M31.3 0.5 L19.8 6 L31.3 11.5 Z" fill="#111"/><path d="M107.3 0.5 L117.5 6 L107.3 11.5 Z" fill="#111"/><path d="M123.3 0.5 L135.6 6 L123.3 11.5 Z" fill="#111"/><rect x="135.9" y="0.5" width="2.1" height="11" fill="#111"/></svg>
<div class="t" style="left:127.7px;top:1054.17px;font-size:13.5px;color:#222;">1</div>
<div class="t" style="left:146.0px;top:1054.17px;font-size:13.5px;color:#222;letter-spacing:0.871px;">of</div>
<div class="t" style="left:167.0px;top:1054.17px;font-size:13.5px;color:#222;letter-spacing:-0.508px;">13</div>
<div class="a" style="left:305px;top:245px;width:945px;height:826px;background:#a6a6a6"></div>
<div class="a" style="left:330px;top:270px;width:330px;height:524px;background:#fff;border-radius:4px"></div>
<div class="t" style="left:345.3px;top:289.30px;font-size:15px;color:#1a1a1a;letter-spacing:0.384px;">Text Frame - All outputs</div>
<div class="t" style="left:345.3px;top:329.67px;font-size:13.5px;color:#1a1a1a;letter-spacing:0.199px;">Title</div>
<div class="t" style="left:345.3px;top:369.37px;font-size:13.5px;color:#1a1a1a;letter-spacing:0.021px;">Title Style</div>
<div class="t" style="left:345.3px;top:405.57px;font-size:13.5px;color:#1a1a1a;letter-spacing:-0.031px;">HTML Section Level</div>
<div class="t" style="left:345.3px;top:478.27px;font-size:13.5px;color:#1a1a1a;letter-spacing:0.317px;">Content</div>
<div class="t" style="left:345.3px;top:745.27px;font-size:13.5px;color:#1a1a1a;letter-spacing:0.354px;">Options</div>
<div class="a" style="left:490px;top:324px;width:160px;height:34px;background:#fff;border:1px solid #5b5fc7;border-radius:4px"></div>
<div class="t" style="left:502.0px;top:335.77px;font-size:13.5px;color:#8a8a8a;letter-spacing:0.052px;">How to view and ac</div>
<div class="a" style="left:490px;top:362px;width:160px;height:35px;background:linear-gradient(#ececec,#e3e3e3);border:1px solid #c7c7c7;border-radius:2px"></div>
<div class="t" style="left:501.5px;top:373.57px;font-size:13.5px;color:#1a1a1a;letter-spacing:-0.172px;">Heading 1</div>
<div class="a" style="left:490px;top:398px;width:160px;height:36.5px;background:linear-gradient(#ececec,#e3e3e3);border:1px solid #c7c7c7;border-radius:2px"></div>
<div class="t" style="left:501.5px;top:411.27px;font-size:13.5px;color:#1a1a1a;letter-spacing:0.082px;">Normal</div>
<div class="a" style="left:490px;top:478px;width:160px;height:249px;background:#fff;border:1px solid #5b5fc7"></div>
<div class="t" style="left:500.0px;top:480.97px;font-size:11.5px;color:#111;letter-spacing:0.546px;">This guide will take you</div>
<div class="t" style="left:500.0px;top:495.77px;font-size:11.5px;color:#111;letter-spacing:0.461px;">from your computer</div>
<div class="a" style="left:496px;top:739.5px;width:14px;height:12.5px;background:#fff;border:1px solid #333"></div>
<div class="t" style="left:515.2px;top:740.80px;font-size:13px;color:#1a1a1a;letter-spacing:0.381px;">Restart Counter Number</div>
<div class="a" style="left:496px;top:757.5px;width:14px;height:12.5px;background:#fff;border:1px solid #333"></div>
<svg style="left:497px;top:758px" width="12" height="11"><path d="M2 5.5 L5 9 L10.5 1.5" fill="none" stroke="#111" stroke-width="1.5"/></svg>
<div class="t" style="left:515.2px;top:759.00px;font-size:13px;color:#1a1a1a;letter-spacing:0.350px;">Insert Page Break</div>
<div class="t" style="left:1612.3px;top:273.27px;font-size:13.5px;color:#1a1a1a;letter-spacing:-0.201px;">Frame</div>
<div class="a" style="left:1607px;top:293px;width:130.5px;height:2.5px;background:#1370d3"></div>
<div class="t" style="left:1612.3px;top:308.27px;font-size:13.5px;color:#1a1a1a;letter-spacing:-0.927px;">E5GFAIPZJE</div>
<div class="t" style="left:1712.0px;top:311.66px;font-size:9.5px;color:#2222ee;letter-spacing:0.256px;">Copy to Clipboard</div>
<div class="t" style="left:1612.3px;top:338.17px;font-size:13.5px;color:#1a1a1a;letter-spacing:0.278px;">Video and Audio</div>
<div class="a" style="left:1607px;top:358px;width:130.5px;height:2.5px;background:#1370d3"></div>
<div class="t" style="left:1612.3px;top:373.17px;font-size:13.5px;color:#1a1a1a;letter-spacing:0.047px;">Audio File:</div>
<div class="t" style="left:1687.5px;top:373.17px;font-size:13.5px;color:#1a1a1a;letter-spacing:0.282px;">None</div>
<div class="t" style="left:1728.5px;top:375.56px;font-size:9.5px;color:#3b3bb5;letter-spacing:0.219px;">Edit Audio</div>
<div class="a" style="left:1728.5px;top:386.5px;width:45.5px;height:1px;background:#6060c0"></div>
<div class="a" style="left:1626px;top:1063px;width:228px;height:2px;background:#7a7a7a;border-radius:1px"></div>
<div class="a" style="left:619px;top:198px;width:699px;height:699px;border-radius:8px;box-shadow:4px 16px 48px rgba(0,0,0,.23),0 2px 8px rgba(0,0,0,.10)"></div>
<div class="a" style="left:619px;top:198px;width:699px;height:699px;border-radius:8px;border:1px solid #b9b6be;background:linear-gradient(90deg,#f3f1f8 0%,#f4f0f8 40%,#f8eef6 100%);overflow:hidden">
</div>
<div class="t" style="left:635.5px;top:208.70px;font-size:13px;color:#2a2a2a;letter-spacing:-0.077px;">Confluence</div>
<svg style="left:1290.5px;top:208px" width="12" height="12"><path d="M0.5 0.5 L11 11 M11 0.5 L0.5 11" stroke="#333" stroke-width="1.2"/></svg>
<div class="a" style="left:630.5px;top:256px;width:682px;height:125px;border:1px solid #d3dce2;border-radius:4px"></div>
<div class="a" style="left:634.6px;top:250.7px;width:192px;height:6px;background:#f3f1f8"></div>
<div class="t" style="left:638.6px;top:249.70px;font-size:13px;font-weight:bold;color:#404040;letter-spacing:0.230px;">Information from Confluence</div>
<div class="t" style="left:640.4px;top:278.47px;font-size:13.5px;color:#2b2b2b;letter-spacing:0.226px;">Last Published Page Name:</div>
<div class="t" style="left:822.0px;top:278.47px;font-size:13.5px;color:#2b2b2b;letter-spacing:0.332px;">-- Not created yet --</div>
<div class="t" style="left:640.4px;top:306.57px;font-size:13.5px;color:#2b2b2b;letter-spacing:0.318px;">Published Page's Space:</div>
<div class="t" style="left:822.0px;top:306.57px;font-size:13.5px;color:#2b2b2b;letter-spacing:0.332px;">-- Not created yet --</div>
<div class="t" style="left:991.2px;top:273.27px;font-size:13.5px;color:#2b2b2b;letter-spacing:-0.035px;">Last Published Parent Link:</div>
<div class="t" style="left:1171.8px;top:273.27px;font-size:13.5px;color:#2b2b2b;letter-spacing:0.389px;">-- Not created yet --</div>
<div class="t" style="left:991.2px;top:301.37px;font-size:13.5px;color:#2b2b2b;letter-spacing:-0.084px;">Last Published Page Link:</div>
<div class="t" style="left:1171.8px;top:301.37px;font-size:13.5px;color:#2b2b2b;letter-spacing:0.389px;">-- Not created yet --</div>
<div class="a" style="left:643.5px;top:337.5px;width:115px;height:31px;background:#fdfcfe;border:1px solid #e3e1e6;border-bottom-color:#d0ced4;border-radius:4px"></div>
<div class="t" style="left:654.3px;top:346.87px;font-size:13.5px;color:#2b2b2b;letter-spacing:0.085px;">Set Connection</div>
<div class="t" style="left:772.0px;top:346.87px;font-size:13.5px;color:#169c16;letter-spacing:0.100px;">Connected</div>
<div class="a" style="left:630.5px;top:395px;width:682px;height:130px;border:1px solid #d3dce2;border-radius:4px"></div>
<div class="a" style="left:634px;top:388.7px;width:134px;height:6px;background:#f3f1f8"></div>
<div class="t" style="left:638.0px;top:387.70px;font-size:13px;font-weight:bold;color:#404040;letter-spacing:0.092px;">Standard Properties</div>
<div class="a" style="left:729px;top:406px;width:212.5px;height:31.5px;background:#fcfafd;border:1px solid #ebe8ee;border-radius:4px"></div>
<div class="t" style="left:640.3px;top:416.47px;font-size:13.5px;color:#2b2b2b;letter-spacing:-0.505px;">Space:</div>
<div class="t" style="left:739.2px;top:416.47px;font-size:13.5px;color:#2a2a2a;letter-spacing:-0.030px;">SD : Software Developme...</div>
<svg style="left:923.0px;top:421.5px" width="8" height="4.0"><path d="M0.5 0.5 L4.0 3.5 L7.5 0.5" fill="none" stroke="#888" stroke-width="1.0"/></svg>
<div class="t" style="left:950.2px;top:417.37px;font-size:13.5px;color:#2b2b2b;letter-spacing:-0.185px;">Set Parent:</div>
<div class="a" style="left:1049px;top:406px;width:232px;height:31.5px;background:#fcfafd;border:1px solid #ebe8ee;border-radius:4px"></div>
<svg style="left:1262.0px;top:421.5px" width="8" height="4.0"><path d="M0.5 0.5 L4.0 3.5 L7.5 0.5" fill="none" stroke="#888" stroke-width="1.0"/></svg>
<div class="a" style="left:729px;top:443.7px;width:515.5px;height:38px;background:#fcfafd;border:1px solid #ebe8ee;border-radius:4px"></div>
<div class="t" style="left:640.3px;top:451.57px;font-size:13.5px;color:#2b2b2b;letter-spacing:-0.304px;">Path:</div>
<div class="t" style="left:738.5px;top:456.47px;font-size:13.5px;color:#2a2a2a;letter-spacing:0.108px;">Contossi /</div>
<svg style="left:1257px;top:456px" width="19" height="16"><path d="M8 0.7 L0.8 8 L8 15.3 M0.8 8 H18.3" fill="none" stroke="#333" stroke-width="1.3"/></svg>
<div class="a" style="left:729px;top:486px;width:552px;height:32.5px;background:#fcfafd;border:1px solid #ebe8ee;border-bottom:1px solid #9a9aa2;border-radius:4px"></div>
<div class="t" style="left:640.3px;top:496.07px;font-size:13.5px;color:#2b2b2b;letter-spacing:-0.204px;">Page Name:</div>
<div class="t" style="left:740.3px;top:496.07px;font-size:13.5px;color:#8d8d8d;letter-spacing:0.007px;">Accessing Local Network Devices</div>
<div class="a" style="left:630.5px;top:550px;width:682px;height:74.5px;border:1px solid #d3dce2;border-radius:4px"></div>
<div class="a" style="left:634px;top:544.7px;width:289px;height:6px;background:#f3f1f8"></div>
<div class="t" style="left:638.0px;top:543.70px;font-size:13px;font-weight:bold;color:#404040;letter-spacing:0.137px;">Metadata - Format, Keys and Replace Values</div>
<div class="a" style="left:648.6px;top:575.6px;width:193px;height:30.5px;background:#fdfcfe;border:1px solid #e3e1e6;border-bottom-color:#d0ced4;border-radius:4px"></div>
<div class="t" style="left:702.5px;top:584.57px;font-size:13.5px;color:#2b2b2b;letter-spacing:0.169px;">Edit Metadata</div>
<div class="a" style="left:630.5px;top:642.6px;width:682px;height:55px;border:1px solid #d3dce2;border-radius:4px"></div>
<div class="a" style="left:634.4px;top:636.7px;width:58px;height:6px;background:#f3f1f8"></div>
<div class="t" style="left:638.4px;top:635.70px;font-size:13px;font-weight:bold;color:#404040;letter-spacing:0.128px;">Options</div>
<div class="a" style="left:639.2px;top:662.4px;width:19.8px;height:19.5px;background:#f0eff3;border:1px solid #8b8b8b;border-radius:4px"></div>
<div class="t" style="left:670.5px;top:666.97px;font-size:13.5px;color:#2b2b2b;letter-spacing:0.030px;">Include Frame Titles</div>
<svg style="left:820.4px;top:665.2px" width="19.5" height="19.5"><rect x="0" y="0" width="19.5" height="19.5" rx="4" fill="#0f61c3"/><path d="M5.265000000000001 10.14 L8.385 13.260000000000002 L14.625 6.630000000000001" fill="none" stroke="#fff" stroke-width="1.3"/></svg>
<div class="t" style="left:851.5px;top:669.67px;font-size:13.5px;color:#2b2b2b;letter-spacing:0.069px;">Create Table of Contents</div>
<svg style="left:1019px;top:665.2px" width="19.5" height="19.5"><rect x="0" y="0" width="19.5" height="19.5" rx="4" fill="#0f61c3"/><path d="M5.265000000000001 10.14 L8.385 13.260000000000002 L14.625 6.630000000000001" fill="none" stroke="#fff" stroke-width="1.3"/></svg>
<div class="t" style="left:1050.9px;top:669.67px;font-size:13.5px;color:#2b2b2b;letter-spacing:0.121px;">Include Snipped Images</div>
<div class="a" style="left:630.7px;top:709.2px;width:682px;height:73px;background:#f4f4f4;border:1px solid #ebebeb;border-radius:4px"></div>
<div class="a" style="left:922.5px;top:851px;width:93px;height:43px;background:#fdfcfe;border:1px solid #e3e1e6;border-radius:5px"></div>
<div class="t" style="left:945.0px;top:867.73px;font-size:14.5px;color:#2e2e2e;letter-spacing:0.278px;">Publish</div>
<div class="a" style="left:766px;top:341.3px;width:79px;height:23.5px;border:3px solid #ff8412"></div>
<div class="a" style="left:802.5px;top:325px;width:3px;height:17px;background:#ff8412"></div>
<div class="a" style="left:776.1px;top:272.0px;width:55.6px;height:55.6px;border-radius:50%;background:#fe8410"></div>
<div class="t" style="left:797.6px;top:288.53px;font-size:23px;font-weight:bold;color:#fff;">9</div>
<div class="a" style="left:631.5px;top:403px;width:315.0px;height:37px;border:3px solid #ff8412"></div>
<div class="a" style="left:946.5px;top:403px;width:338.0px;height:37px;border:3px solid #ff8412"></div>
<div class="a" style="left:1113.0px;top:373px;width:3px;height:31px;background:#ff8412"></div>
<div class="a" style="left:1086.8px;top:319.3px;width:55.6px;height:55.6px;border-radius:50%;background:#fe8410"></div>
<div class="t" style="left:1102.1px;top:335.83px;font-size:23px;font-weight:bold;color:#fff;letter-spacing:0.343px;">11</div>
<div class="a" style="left:636px;top:442px;width:171.29999999999995px;height:41px;border:3px solid #ff8412"></div>
<div class="a" style="left:635.2px;top:485px;width:318.29999999999995px;height:33.299999999999955px;border:3px solid #ff8412"></div>
<svg style="left:0;top:0" width="1935" height="1092"><path d="M952 501 L990 501" stroke="#ff8412" stroke-width="3"/></svg>
<div class="a" style="left:986.9px;top:472.7px;width:55.6px;height:55.6px;border-radius:50%;background:#fe8410"></div>
<div class="t" style="left:1002.2px;top:489.23px;font-size:23px;font-weight:bold;color:#fff;letter-spacing:-0.292px;">13</div>
<svg style="left:0;top:0" width="1935" height="1092"><path d="M595 410.5 L633 421" stroke="#ff8412" stroke-width="3"/></svg>
<div class="a" style="left:542.4px;top:375.3px;width:55.6px;height:55.6px;border-radius:50%;background:#fe8410"></div>
<div class="t" style="left:557.7px;top:391.83px;font-size:23px;font-weight:bold;color:#fff;letter-spacing:-0.292px;">10</div>
<svg style="left:0;top:0" width="1935" height="1092"><path d="M597 503 L637 460" stroke="#ff8412" stroke-width="3"/></svg>
<div class="a" style="left:551.4px;top:493.9px;width:55.6px;height:55.6px;border-radius:50%;background:#fe8410"></div>
<div class="t" style="left:566.7px;top:510.43px;font-size:23px;font-weight:bold;color:#fff;letter-spacing:-0.292px;">12</div>
<div class="a" style="left:918.3px;top:845px;width:101.5px;height:52px;border:3px solid #ff8412"></div>
<div class="a" style="left:968.0px;top:817px;width:3px;height:29px;background:#ff8412"></div>
<div class="a" style="left:941.9px;top:763.3px;width:55.6px;height:55.6px;border-radius:50%;background:#fe8410"></div>
<div class="t" style="left:957.2px;top:779.83px;font-size:23px;font-weight:bold;color:#fff;letter-spacing:-0.292px;">14</div>
</body></html>
